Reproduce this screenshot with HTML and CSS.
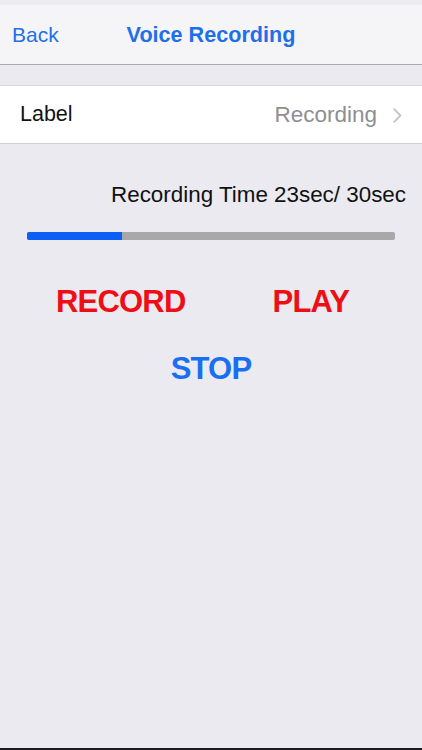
FILE: index.html
```html
<!DOCTYPE html>
<html>
<head>
<meta charset="utf-8">
<link rel="stylesheet" href="styles.css">
</head>
<body>
<div class="screen">
  <div class="status"></div>
  <header class="nav">
    <span class="nav-back">Back</span>
    <span class="nav-title">Voice Recording</span>
    <span class="nav-spacer"></span>
  </header>
  <div class="group-gap"></div>
  <div class="cell">
    <span class="cell-label">Label</span>
    <span class="cell-value">Recording
      <svg class="chevron" width="9" height="15" viewBox="0 0 9 15"><path d="M1.2 1.2 L7.4 7.5 L1.2 13.8" fill="none" stroke="#c4c4c9" stroke-width="1.8" stroke-linecap="round" stroke-linejoin="round"/></svg>
    </span>
  </div>
  <main class="content">
    <div class="time">Recording Time 23sec/ 30sec</div>
    <div class="progress"><div class="progress-fill" style="width:95px"></div></div>
    <div class="actions">
      <span class="btn red">RECORD</span>
      <span class="btn red">PLAY</span>
    </div>
    <div class="stop-row"><span class="btn blue">STOP</span></div>
  </main>
  <div class="bottom-edge"></div>
</div>
</body>
</html>
```

FILE: styles.css
```css
* { box-sizing: border-box; }
html, body { margin: 0; padding: 0; }
body {
  width: 422px;
  height: 750px;
  overflow: hidden;
  background: #ebeaf0;
  font-family: "Liberation Sans", Arial, sans-serif;
}
.screen {
  height: 750px;
  display: flex;
  flex-direction: column;
}
.status {
  height: 5px;
  background: #ecebf0;
}
.nav {
  height: 60px;
  background: #f5f5f8;
  border-bottom: 1px solid #a9a9ae;
  display: grid;
  grid-template-columns: 1fr auto 1fr;
  align-items: center;
  padding: 0 12px;
  font-size: 21px;
  color: #1f6fe8;
}
.nav-back { justify-self: start; }
.nav-title { font-weight: bold; font-size: 21.6px; }
.group-gap { height: 20px; }
.cell {
  height: 59px;
  background: #ffffff;
  border-top: 1px solid #d6d6da;
  border-bottom: 1px solid #cfcfd4;
  display: flex;
  align-items: center;
  justify-content: space-between;
  padding: 0 20px 0 20px;
  font-size: 21.5px;
}
.cell-label { color: #111; }
.cell-value {
  color: #8e8e93;
  display: flex;
  align-items: center;
  gap: 16px;
  font-size: 22.5px;
}
.chevron { display: block; margin-top: 1px; }
.content {
  flex: 1;
  display: flex;
  flex-direction: column;
}
.time {
  margin-top: 38px;
  align-self: flex-end;
  padding-right: 16px;
  font-size: 22.4px;
  line-height: 26px;
  color: #111;
}
.progress {
  margin: 24px 27px 0 27px;
  height: 8px;
  background: #a8a8aa;
  border-radius: 2px;
  overflow: hidden;
}
.progress-fill {
  height: 100%;
  background: #0b5ff4;
}
.actions {
  margin-top: 44px;
  display: flex;
  padding-left: 56px;
  gap: 87px;
}
.btn {
  font-weight: bold;
  font-size: 31px;
  line-height: 36px;
  letter-spacing: -0.8px;
}
.red { color: #ee0e16; }
.blue { color: #1a6ef0; }
.stop-row {
  margin-top: 31px;
  display: flex;
  justify-content: center;
}
.bottom-edge {
  height: 2px;
  background: #1c1c1e;
}
```
